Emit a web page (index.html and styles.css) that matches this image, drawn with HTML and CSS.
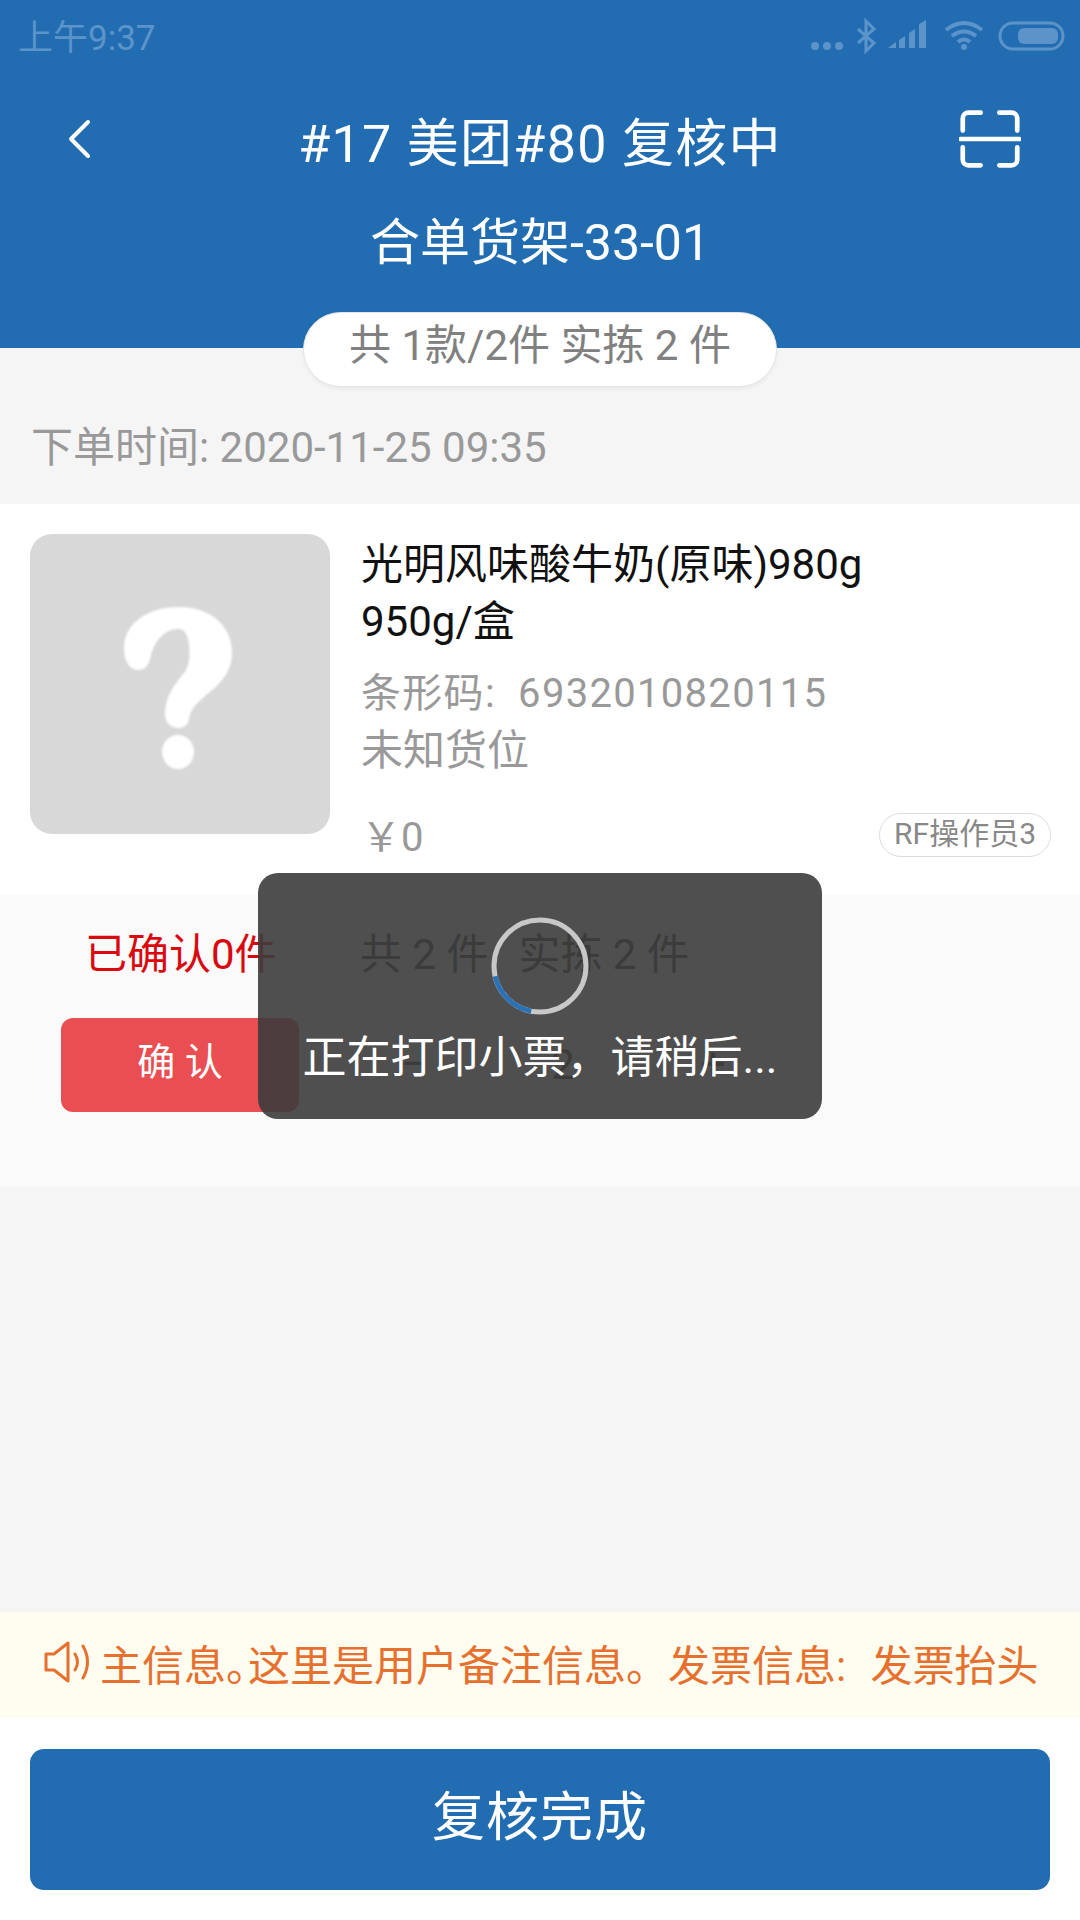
FILE: index.html
```html
<!DOCTYPE html>
<html lang="zh-CN">
<head>
  <meta charset="UTF-8" />
  <title>复核中</title>
  <link rel="stylesheet" href="styles.css">
</head>
<body>
  <div class="page">
    <header class="top">
      <div class="status">
        <span class="clock">上午9:37</span>
        <svg class="status-icons" width="260" height="40" viewBox="0 0 260 40" fill="none">
          <g fill="#5c94ca">
            <circle cx="5" cy="31" r="4"/><circle cx="17" cy="31" r="4"/><circle cx="29" cy="31" r="4"/>
            <path d="M78 33l8-6v6zM89 25l6-4v12h-6zM99 18l6-4v19h-6zM109 9l7-4v28h-7z"/>
          </g>
          <path d="M48 14l16 14-8 8V6l8 8-16 14" stroke="#5c94ca" stroke-width="3"/>
          <path d="M136 15q18-14 36 0M142 21q12-9 24 0M148 27q6-5 12 0" stroke="#5c94ca" stroke-width="4"/>
          <circle cx="154" cy="32" r="3" fill="#5c94ca"/>
          <rect x="190" y="8" width="63" height="26" rx="13" stroke="#5c94ca" stroke-width="3"/>
          <rect x="208" y="13" width="40" height="16" rx="6" fill="#5c94ca"/>
        </svg>
      </div>
      <div class="nav">
        <svg class="back" width="26" height="40" viewBox="0 0 26 40" fill="none">
          <path d="M22 3L5 20l17 17" stroke="#fff" stroke-width="4" stroke-linecap="round" stroke-linejoin="round"/>
        </svg>
        <h1 class="title">#17 美团#80 复核中</h1>
        <svg class="scan" width="62" height="60" viewBox="0 0 66 62" fill="none">
          <path d="M23 3H10a6 6 0 0 0-6 6v13M43 3h13a6 6 0 0 1 6 6v13M23 59H10a6 6 0 0 1-6-6V40M43 59h13a6 6 0 0 0 6-6V40M2 31h62" stroke="#fff" stroke-width="5" stroke-linecap="round"/>
        </svg>
      </div>
      <div class="shelf">合单货架-33-01</div>
    </header>

    <div class="pill">共 1款/2件 实拣 2 件</div>
    <div class="order-time">下单时间: 2020-11-25 09:35</div>

    <section class="item">
      <div class="thumb">
        <svg class="unknown" width="108" height="162" viewBox="0 0 108 162" fill="#fff">
          <path d="M0 42C0 15 25 0 55 0c33 0 53 20 53 46 0 22-16 34-28 44-8 7-14 13-15 22-1 6-5 9-11 9-7 0-13-6-13-13 0-20 11-32 19-42 6-8 6-18 5-28-1-11-5-16-10-16-15 0-25 12-29 30-2 8-6 11-12 11C6 63 0 54 0 42z"/>
          <ellipse cx="54" cy="145" rx="16" ry="17"/>
        </svg>
      </div>
      <div class="info">
        <div class="name">光明风味酸牛奶(原味)980g<br>950g/盒</div>
        <div class="meta barcode">条形码: 6932010820115</div>
        <div class="meta location">未知货位</div>
        <div class="price-row">
          <span class="price">￥0</span>
          <span class="tag">RF操作员3</span>
        </div>
      </div>
    </section>

    <section class="check">
      <div class="check-left">
        <div class="confirmed">已确认0件</div>
        <div class="confirm-btn">确 认</div>
      </div>
      <div class="check-right">
        <div class="totals"><span>共 2 件</span><span>实拣 2 件</span></div>
        <div class="stepper">
          <span class="step">−</span>
          <span class="step-num">2</span>
          <span class="step">+</span>
        </div>
      </div>
    </section>

    <div class="blank"></div>

    <div class="notice">
      <svg width="46" height="44" viewBox="0 0 46 44" fill="none">
        <path d="M2 14h8L24 3v38L10 30H2z" stroke="#e6702e" stroke-width="3" stroke-linejoin="round"/>
        <path d="M31 14q5 8 0 16M39 6q9 16 0 32" stroke="#e6702e" stroke-width="3" stroke-linecap="round"/>
      </svg>
      <span class="notice-text">主信息<span class="tight">。</span>这里是用户备注信息。发票信息: 发票抬头</span>
    </div>

    <footer class="bottom">
      <div class="finish">复核完成</div>
    </footer>

    <div class="toast">
      <svg class="spinner" width="100" height="100" viewBox="0 0 100 100" fill="none">
        <circle cx="50" cy="50" r="46" stroke="#c8c8c8" stroke-width="5"/>
        <circle class="spinner-arc" cx="50" cy="50" r="46" stroke="#2a72b5" stroke-width="5" stroke-dasharray="53 236"/>
      </svg>
      <div class="toast-text">正在打印小票，请稍后...</div>
    </div>
  </div>
</body>
</html>
```

FILE: styles.css
```css
* {
  box-sizing: border-box;
}

body {
  margin: 0;
  font-family: Roboto, "Noto Sans CJK SC", sans-serif;
  background: #f5f5f5;
}

.page {
  position: relative;
  width: 1080px;
  height: 1920px;
  display: flex;
  flex-direction: column;
  overflow: hidden;
}

.top {
  height: 348px;
  background: #226db1;
  color: #fff;
  flex-shrink: 0;
}

.status {
  height: 72px;
  display: flex;
  align-items: center;
  justify-content: space-between;
  padding: 0 10px 0 18px;
}

.clock {
  margin-bottom: 4px;
  font-size: 35px;
  color: #5c94ca;
}

.status-icons {
  margin-bottom: 2px;
}

.nav {
  height: 134px;
  display: grid;
  grid-template-columns: 1fr auto 1fr;
  align-items: center;
  padding: 0 58px;
}

.back {
  margin-left: 8px;
}

.title {
  margin: 0;
  font-size: 52px;
  font-weight: 400;
  letter-spacing: 1.3px;
}

.scan {
  justify-self: end;
  margin-right: 1px;
}

.shelf {
  margin-top: 7px;
  text-align: center;
  font-size: 50px;
  line-height: 60px;
}

.pill {
  align-self: center;
  width: 474px;
  height: 75px;
  margin-top: -36px;
  border: 1px solid #e4e4e4;
  border-radius: 38px;
  background: #fff;
  color: #808080;
  font-size: 42px;
  line-height: 66px;
  text-align: center;
  box-shadow: 0 2px 4px rgba(0, 0, 0, 0.05);
}

.order-time {
  height: 117px;
  padding: 36px 0 0 31px;
  color: #999;
  font-size: 42px;
  line-height: 50px;
  white-space: nowrap;
}

.item {
  height: 391px;
  display: flex;
  gap: 31px;
  padding: 30px 29px 0 30px;
  background: #fff;
}

.thumb {
  width: 300px;
  height: 300px;
  flex-shrink: 0;
  display: flex;
  align-items: center;
  justify-content: center;
  border-radius: 22px;
  background: #d8d8d8;
}

.unknown {
  margin: 8px 4px 0 0;
  filter: blur(1px);
}

.info {
  flex: 1;
  padding-top: 2px;
}

.name {
  font-size: 42px;
  line-height: 57px;
  color: #111;
  white-space: nowrap;
}

.meta {
  line-height: 57px;
  color: #999;
}

.barcode {
  margin-top: 15px;
  font-size: 40px;
  letter-spacing: 1.3px;
  word-spacing: 11px;
  white-space: nowrap;
}

.location {
  font-size: 42px;
}

.price-row {
  display: flex;
  justify-content: space-between;
  align-items: center;
  margin-top: 26px;
}

.price {
  font-size: 40px;
  color: #999;
}

.tag {
  height: 44px;
  padding: 0 14px;
  border: 1px solid #ddd;
  border-radius: 22px;
  color: #888;
  font-size: 30px;
  line-height: 40px;
  margin-top: 2px;
  white-space: nowrap;
}

.check {
  height: 292px;
  display: flex;
  background: #fafafa;
}

.check-left {
  width: 360px;
  padding-left: 61px;
}

.confirmed {
  margin: 35px 0 0 24px;
  color: #d9090f;
  font-size: 42px;
  line-height: 50px;
  white-space: nowrap;
}

.confirm-btn {
  width: 238px;
  height: 94px;
  margin-top: 38px;
  border-radius: 12px;
  background: #e94e52;
  color: #fff;
  font-size: 38px;
  line-height: 88px;
  text-align: center;
}

.check-right {
  flex: 1;
}

.totals {
  display: flex;
  gap: 30px;
  margin-top: 35px;
  color: #333;
  font-size: 42px;
  line-height: 50px;
}

.stepper {
  display: flex;
  align-items: center;
  height: 84px;
  margin-top: 42px;
  padding-left: 8px;
  color: #333;
}

.step {
  width: 90px;
  text-align: center;
  font-size: 44px;
}

.step-num {
  width: 210px;
  text-align: center;
  font-size: 42px;
}

.blank {
  flex: 1;
}

.notice {
  height: 106px;
  display: flex;
  align-items: center;
  gap: 10px;
  padding: 0 0 6px 44px;
  background: #fffdf0;
  color: #e6702e;
  font-size: 42px;
  white-space: nowrap;
}

.notice-text {
  word-spacing: 14px;
}

.tight {
  margin-right: -20px;
}

.bottom {
  height: 202px;
  padding: 31px 30px 0;
  background: #fff;
}

.finish {
  height: 141px;
  border-radius: 14px;
  background: #226db1;
  color: #fff;
  font-size: 53px;
  line-height: 138px;
  text-align: center;
  letter-spacing: 1px;
}

.toast {
  position: absolute;
  left: 258px;
  top: 873px;
  width: 564px;
  height: 246px;
  border-radius: 20px;
  background: rgba(60, 60, 60, 0.9);
  color: #fff;
  text-align: center;
}

.spinner {
  display: block;
  margin: 43px auto 0;
}

.spinner-arc {
  transform: rotate(101deg);
  transform-origin: 50px 50px;
}

.toast-text {
  margin-top: 14px;
  font-size: 44px;
  line-height: 56px;
  white-space: nowrap;
}
```
